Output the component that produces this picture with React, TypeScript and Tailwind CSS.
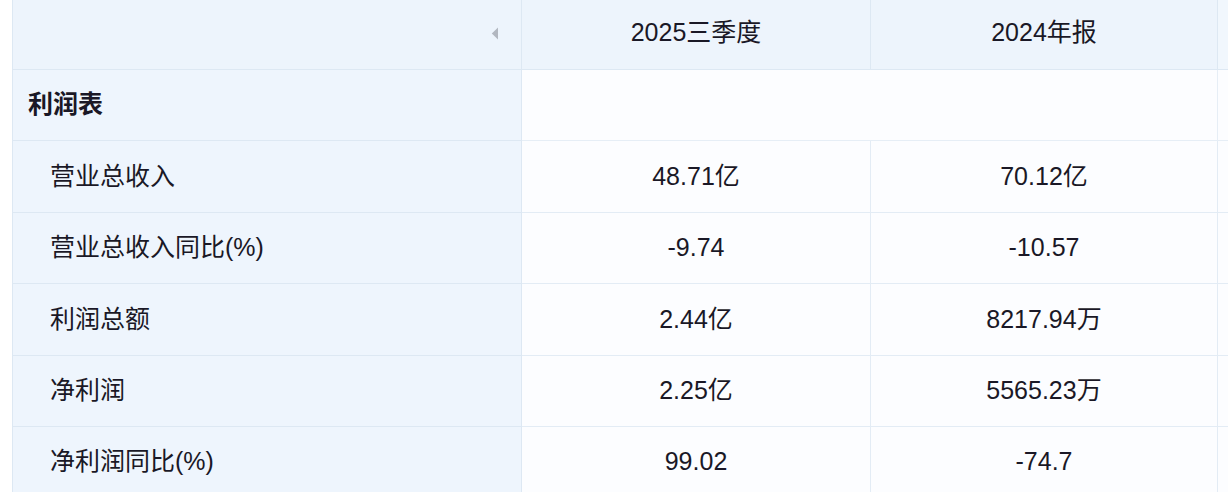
import React from 'react';

const rows = [
  { label: '营业总收入', q3: '48.71亿', y24: '70.12亿' },
  { label: '营业总收入同比(%)', q3: '-9.74', y24: '-10.57' },
  { label: '利润总额', q3: '2.44亿', y24: '8217.94万' },
  { label: '净利润', q3: '2.25亿', y24: '5565.23万' },
  { label: '净利润同比(%)', q3: '99.02', y24: '-74.7' },
];

const font = { fontFamily: '"Liberation Sans", "Noto Sans CJK SC", sans-serif' };

const gridCols = 'grid grid-cols-[12px_510px_349px_347px_10px]';

const App: React.FC = () => {
  return (
    <div className="w-[1228px] h-[492px] overflow-hidden bg-white text-[25px] text-[#1a1826]" style={font}>
      {/* header */}
      <div className={`${gridCols} h-[70px]`}>
        <div className="bg-white" />
        <div className="flex items-center justify-end pr-[22px] pb-[2px] bg-[#edf4fc] border-l border-r border-b border-[#dde8f3]">
          <svg width="8" height="13" viewBox="0 0 8 13">
            <path d="M7 0.5 L0.8 6.5 L7 12.5 Z" fill="#b2b7c0" />
          </svg>
        </div>
        <div className="flex items-center justify-center pb-[4px] bg-[#edf4fc] border-r border-b border-[#dde8f3]">2025三季度</div>
        <div className="flex items-center justify-center pb-[4px] bg-[#edf4fc] border-r border-b border-[#dde8f3]">2024年报</div>
        <div className="bg-[#f1f7fd] border-b border-[#dde8f3]" />
      </div>

      {/* section title */}
      <div className={`${gridCols} h-[71.4px]`}>
        <div className="bg-white" />
        <div className="flex items-center pl-[15px] font-bold bg-[#eef5fd] border-l border-r border-b border-[#dde8f3]">利润表</div>
        <div className="col-span-2 bg-[#fcfdff] border-r border-b border-[#e6eef6]" />
        <div className="bg-[#fcfdff] border-b border-[#e6eef6]" />
      </div>

      {rows.map((r) => (
        <div key={r.label} className={`${gridCols} h-[71.4px]`}>
          <div className="bg-white" />
          <div className="flex items-center pl-[37px] bg-[#eef5fd] border-l border-r border-b border-[#dde8f3]">{r.label}</div>
          <div className="flex items-center justify-center bg-[#fcfdff] border-r border-b border-[#e3ecf5]">{r.q3}</div>
          <div className="flex items-center justify-center bg-[#fcfdff] border-r border-b border-[#e3ecf5]">{r.y24}</div>
          <div className="bg-[#fcfdff] border-b border-[#e3ecf5]" />
        </div>
      ))}
    </div>
  );
};

export default App;
